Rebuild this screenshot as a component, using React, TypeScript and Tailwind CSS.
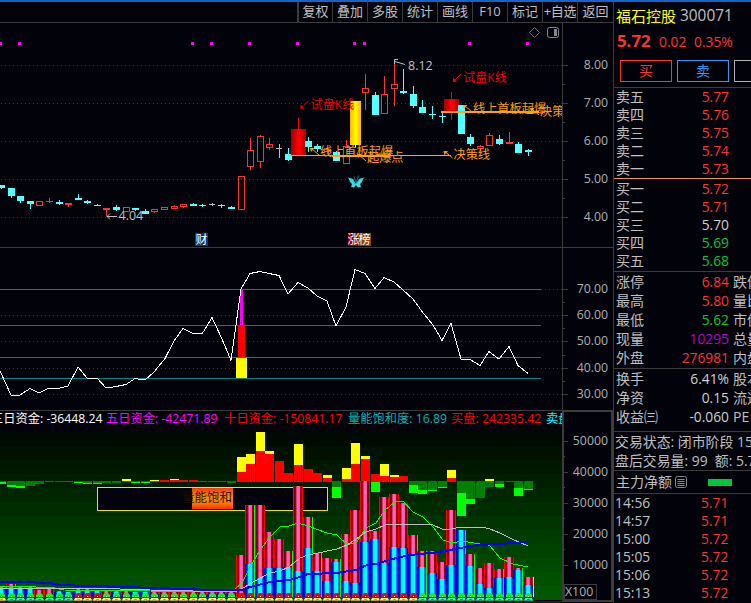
import type { ReactNode } from "react";

const FONT =
  "font-['Open_Sans','Noto_Sans_CJK_SC',sans-serif]";

const RED = "#ff3232";
const CYAN = "#54ffff";
const GRAY = "#c0c0c0";

const barX = (i: number) => Math.floor(1.66 + 9.575 * i);

// kind, body top, body bottom, wick top, wick bottom
type Candle = ["c" | "h" | "r" | "w" | "x", number, number, number, number];

const candles: Candle[] = [
  ["c", 185, 188, 185, 189],
  ["c", 188, 196, 188, 198],
  ["c", 196, 201, 196, 203],
  ["c", 201, 204, 201, 209],
  ["h", 201, 206, 201, 206],
  ["r", 201, 202, 198, 203],
  ["c", 202, 204, 200, 205],
  ["r", 203, 205, 203, 207],
  ["c", 198, 200, 194, 200],
  ["c", 201, 203, 200, 204],
  ["c", 205, 206, 204, 206],
  ["r", 208, 210, 208, 216],
  ["c", 207, 210, 205, 211],
  ["h", 207, 212, 207, 212],
  ["c", 208, 210, 208, 211],
  ["c", 211, 214, 209, 214],
  ["h", 209, 212, 209, 213],
  ["h", 207, 210, 207, 210],
  ["h", 206, 209, 205, 209],
  ["h", 204, 207, 204, 208],
  ["c", 204, 206, 203, 206],
  ["c", 205, 206, 204, 207],
  ["w", 204, 205, 203, 206],
  ["c", 205, 206, 204, 208],
  ["c", 207, 209, 206, 209],
  ["h", 176, 210, 176, 210],
  ["h", 150, 167, 138, 170],
  ["h", 136, 162, 135, 168],
  ["h", 144, 148, 138, 150],
  ["w", 148, 149, 144, 158],
  ["c", 154, 160, 148, 161],
  ["x", 129, 155, 118, 155],
  ["c", 141, 147, 137, 152],
  ["c", 146, 149, 144, 152],
  ["h", 149, 152, 147, 154],
  ["c", 152, 161, 151, 161],
  ["h", 146, 164, 140, 164],
  ["x", 101, 145, 101, 148],
  ["h", 88, 93, 74, 110],
  ["c", 95, 115, 92, 115],
  ["h", 94, 114, 76, 114],
  ["h", 84, 89, 62, 106],
  ["c", 91, 93, 69, 94],
  ["c", 94, 106, 86, 108],
  ["c", 107, 113, 100, 113],
  ["c", 114, 115, 106, 119],
  ["c", 116, 117, 112, 123],
  ["x", 99, 111, 92, 120],
  ["c", 105, 134, 105, 134],
  ["c", 137, 144, 134, 146],
  ["h", 146, 149, 145, 153],
  ["h", 135, 146, 133, 146],
  ["c", 139, 144, 135, 145],
  ["r", 142, 144, 132, 144],
  ["c", 144, 153, 142, 153],
  ["c", 150, 152, 149, 156],
];

const strengthLine =
  "0,371 11,395 20,395 30,388.5 39,393 49,388 60,388 68,386 78,367 87,378 97,378 106,388 116,386.5 126,384.5 135,378.5 145,380 154,372 165,358.5 174,341 183,328.5 193,333.5 202,334 212,317.5 222,339 231,360.5 241,289 250,273.5 260,271.5 269,273.5 279,275.5 288,294 298,282.5 308,288 317,296 327,301 336,326 346,307 355,269.5 365,273.5 375,288.5 384,277.5 394,282 403,290 413,299 422,311.5 433,325 442,340.5 451,323.5 461,359 470,359.5 480,365.5 489,351.5 499,359 509,346.5 518,365.5 528,373.5";

// yellow top, red top (bars above the zero line)
const inflow: Record<number, [number, number]> = {
  13: [479, 481],
  16: [480, 481],
  17: [480, 480],
  18: [479, 480],
  19: [480, 480],
  20: [480, 480],
  21: [481, 481],
  25: [457, 472],
  26: [454, 464],
  27: [432, 451],
  28: [451, 454],
  29: [461, 461],
  30: [473, 473],
  31: [444, 465],
  32: [469, 469],
  33: [473, 473],
  34: [475, 478],
  36: [468, 479],
  37: [443, 464],
  38: [456, 459],
  39: [474, 474],
  40: [464, 476],
  41: [475, 477],
  42: [476, 476],
  47: [470, 478],
  51: [479, 481],
};

// dark green bottom, bright green bottom (bars below the zero line)
const outflow: Record<number, [number, number]> = {
  0: [482, 484],
  1: [485, 487],
  2: [486, 488],
  3: [486, 486],
  4: [484, 484],
  5: [482, 482],
  6: [482, 482],
  7: [482, 482],
  8: [482, 483],
  9: [483, 484],
  10: [483, 484],
  11: [483, 483],
  12: [483, 483],
  14: [482, 483],
  15: [482, 483],
  16: [482, 482],
  22: [482, 482],
  23: [482, 482],
  24: [483, 483],
  35: [487, 498],
  39: [482, 492],
  43: [485, 493],
  44: [490, 494],
  45: [490, 491],
  46: [487, 488],
  48: [493, 516],
  49: [499, 504],
  50: [498, 498],
  51: [487, 487],
  52: [484, 487],
  53: [482, 482],
  54: [488, 496],
  55: [489, 490],
};

// pink top, cyan top
const volumes: [number, number][] = [
  [586, 588], [584, 588], [587, 588], [587, 588], [590, 597], [589, 597], [591, 592], [592, 592],
  [589, 591], [589, 591], [590, 591], [591, 596], [591, 592], [591, 596], [592, 592], [592, 592],
  [592, 594], [592, 597], [592, 597], [592, 597], [592, 597], [592, 595], [592, 594], [592, 594],
  [592, 593], [555, 597], [505, 564], [505, 578], [532, 568], [539, 568], [551, 567], [486, 571],
  [517, 548], [553, 571], [558, 581], [559, 562], [534, 581], [510, 583], [481, 542], [531, 539],
  [497, 563], [494, 547], [503, 548], [535, 555], [551, 567], [551, 573], [562, 579], [510, 565],
  [530, 530], [554, 566], [568, 584], [563, 588], [569, 578], [557, 577], [568, 570], [577, 585],
];

const ma5 =
  "0,586 25,586 36,587 55,588 64,590 150,591 235,592 236,588 242,583 250,567 260,550 270,537 280,527 289,526 298,523 308,526 327,533 337,535 347,544.5 356,543 366,528 376,523 385,510 395,502 403,501 413,512 423,517 433,527 443,540 452,543 462,541 480,544 490,546 500,558 513,564 528,567";
const ma10 =
  "0,588 60,588.5 120,589 150,590 235,592 245,587 255,581 270,573 280,571 289,567 300,558 308,555 318,553 337,549 347,545 356,539 366,532 376,529 385,525 390,524 417,524 433,525 442,529 452,529 460,527 482,527 490,529 500,533 512,539 528,546";
const ma30 =
  "0,582 20,582 50,583 60,585 88,586 125,587 155,588 185,589 215,590 242,590 250,587 270,582 289,580 300,577 308,574 337,573 356,570 367,565 376,564 390,559.5 410,555 440,552 460,548 477,545 500,544 513,543 528,542";

const tools = ["复权", "叠加", "多股", "统计", "画线", "F10", "标记", "+自选", "返回"];
const signals = [0, 19, 192, 211, 249, 297, 354, 364, 469, 527];

function Grid({ ys, from = 1 }: { ys: number[]; from?: number }) {
  return (
    <>
      {ys.map((y) => (
        <line key={y} x1={from} x2={562} y1={y + 0.5} y2={y + 0.5} stroke="#343438" strokeDasharray="1 3" />
      ))}
    </>
  );
}

function Axis({ ticks, minors }: { ticks: [number, string][]; minors: number[] }) {
  return (
    <>
      {ticks.map(([y, text]) => (
        <g key={text}>
          <rect x={562} y={y} width={6} height={1} fill="#3c3c3c" />
          <text x={608} y={y + 4} fontSize={12.3} textAnchor="end" fill="#b0b0b0">
            {text}
          </text>
        </g>
      ))}
      {minors.map((y) => (
        <rect key={y} x={562} y={y} width={3} height={1} fill="#3c3c3c" />
      ))}
    </>
  );
}

function CandleBar({ candle, index }: { candle: Candle; index: number }) {
  const [kind, top, bottom, high, low] = candle;
  const x = barX(index);
  if (kind === "x") {
    const hot = index === 37;
    return (
      <g>
        <rect x={x} y={high} width={1} height={low - high} fill={hot ? "#ff0" : "#f00"} />
        <rect
          x={hot ? 350 : x - 7}
          y={top}
          width={hot ? 11 : 15}
          height={bottom - top}
          fill={hot ? "url(#gold)" : "url(#crimson)"}
        />
      </g>
    );
  }
  const color = kind === "c" ? CYAN : kind === "w" ? GRAY : RED;
  return (
    <g fill={color}>
      {kind === "h" ? (
        <>
          <rect x={x} y={high} width={1} height={top - high} />
          <rect x={x} y={bottom} width={1} height={low - bottom} />
          <rect x={x - 2.5} y={top + 0.5} width={6} height={bottom - top - 1} fill="none" stroke={RED} />
        </>
      ) : (
        <>
          <rect x={x} y={high} width={1} height={low - high} />
          <rect x={x - 3} y={top} width={kind === "w" ? 6 : 7} height={bottom - top} />
        </>
      )}
    </g>
  );
}

function Note({
  x,
  y,
  color,
  up,
  children,
}: {
  x: number;
  y: number;
  color: string;
  up?: boolean;
  children: ReactNode;
}) {
  return (
    <g>
      <path
        d={up ? `M${x - 1} ${y - 1}L${x - 8} ${y - 7}` : `M${x - 2} ${y - 8}L${x - 9} ${y - 1}`}
        stroke={color}
        fill="none"
      />
      <path
        d={
          up
            ? `M${x - 10} ${y - 8}H${x - 5.5}L${x - 9} ${y - 4}Z`
            : `M${x - 10} ${y}V${y - 4.5}L${x - 6} ${y - 0.5}Z`
        }
        fill={color}
      />
      <text x={x} y={y} fontSize={12.2} fill={color}>
        {children}
      </text>
    </g>
  );
}

function PriceChart() {
  return (
    <svg className="block shrink-0" width={613} height={225} viewBox="0 23 613 225">
      <defs>
        <linearGradient id="crimson">
          <stop offset="0" stopColor="#a80000" />
          <stop offset=".2" stopColor="#c00000" />
          <stop offset=".45" stopColor="#ff0000" />
          <stop offset=".6" stopColor="#ff0000" />
          <stop offset="1" stopColor="#a80000" />
        </linearGradient>
        <linearGradient id="gold">
          <stop offset="0" stopColor="#ffb400" />
          <stop offset=".5" stopColor="#ffff00" />
          <stop offset="1" stopColor="#ffb400" />
        </linearGradient>
        <clipPath id="plot">
          <rect x={0} y={23} width={562} height={225} />
        </clipPath>
      </defs>
      <Grid ys={[65, 103, 141, 179, 217]} />
      {signals.map((x) => (
        <rect key={x} x={x === 0 ? -1 : x - 1} y={42} width={3} height={3} fill="#ff00ff" />
      ))}
      {candles.map((c, i) => (
        <CandleBar key={i} candle={c} index={i} />
      ))}
      <rect x={288} y={155} width={163} height={1} fill="#ffa800" />
      <rect x={332} y={155} width={58} height={2} fill="#ffa800" />
      <rect x={441} y={111} width={98} height={2} fill="#ffa800" />
      <g clipPath="url(#plot)">
        <Note x={310.5} y={109} color="#f00000">试盘K线</Note>
        <Note x={463} y={82} color="#f00000">试盘K线</Note>
        <Note x={320} y={156} color="#ffa000" up>线上首板起爆</Note>
        <Note x={367} y={162} color="#ffa000" up>起爆点</Note>
        <Note x={453.5} y={159} color="#ffa000" up>决策线</Note>
        <Note x={473} y={113} color="#ffa000" up>线上首板起爆</Note>
        <Note x={540} y={116} color="#ffa000" up>决策线</Note>
      </g>
      <g stroke={GRAY} fill="none">
        <path d="M107 216.5H117M110 213.5L107 216.5L110 219.5" />
        <path d="M395 61.5L405 64.5M398 59.5H394.5V64" />
        <path d="M534.5 27.5L539.5 32.5L534.5 37.5L529.5 32.5Z" stroke="#777" />
        <rect x={547.5} y={27.5} width={11} height={10} rx={2} stroke="#888" />
      </g>
      <rect x={554} y={29} width={3} height={7} fill="#888" />
      <text x={118.5} y={220} fontSize={12.5} fill={GRAY}>4.04</text>
      <text x={408} y={70} fontSize={12.5} fill={GRAY}>8.12</text>
      <g fill="#35e0e8">
        <path d="M355.5 183.5L353 179L348 177.5L350.5 182.5L352 184L351 187L354 187.5L355.8 185L358 187.5L361 187L360 184L361.5 182.5L364 177.5L359 179L356.5 183.5Z" />
        <path d="M356 182.5L354 176.5M356.3 182.5L358.5 175.5" stroke="#187880" fill="none" />
        <path d="M351 179.5L355 184L360.5 179.5" stroke="#20b8c4" strokeWidth={0.7} fill="none" />
      </g>
      <rect x={195} y={233} width={13} height={13} fill="#003c78" />
      <text x={195.5} y={244} fontSize={12} fill="#fff">财</text>
      <rect x={348} y={233} width={10} height={13} fill="#8c0000" />
      <rect x={358} y={233} width={13} height={13} fill="#8c4600" />
      <text x={347.5} y={244} fontSize={12} fill="#fff" textLength={23}>涨榜</text>
      <rect x={562} y={23} width={1} height={225} fill="#3c3c3c" />
      <rect x={0} y={247} width={613} height={1} fill="#3c3c3c" />
      <Axis
        ticks={[[65, "8.00"], [103, "7.00"], [141, "6.00"], [179, "5.00"], [217, "4.00"]]}
        minors={[84, 122, 160, 198]}
      />
    </svg>
  );
}

function StrengthChart() {
  return (
    <svg className="block shrink-0" width={613} height={163} viewBox="0 248 613 163">
      <Grid ys={[289, 315, 341, 368, 394]} />
      {[289, 325, 357, 378].map((y) => (
        <rect key={y} x={0} y={y} width={541} height={1} fill="#008484" />
      ))}
      <rect x={240} y={290} width={3} height={35} fill="#ff00ff" />
      <rect x={238} y={325} width={7} height={32} fill="#ff0000" />
      <rect x={236} y={358} width={11} height={20} fill="#ffff00" />
      <polyline points={strengthLine} fill="none" stroke="#fff" shapeRendering="crispEdges" />
      <rect x={562} y={248} width={1} height={163} fill="#3c3c3c" />
      <rect x={0} y={410} width={613} height={1} fill="#3c3c3c" />
      <Axis
        ticks={[[289, "70.00"], [315, "60.00"], [341, "50.00"], [368, "40.00"], [394, "30.00"]]}
        minors={[302, 328, 355, 381]}
      />
    </svg>
  );
}

function VolumeChart() {
  return (
    <svg className="block shrink-0" width={562} height={171} viewBox="0 432 562 171">
      <defs>
        <linearGradient id="pinkBar">
          <stop offset="0" stopColor="#ff0000" />
          <stop offset=".12" stopColor="#ff0000" />
          <stop offset=".12" stopColor="#6c0000" />
          <stop offset=".28" stopColor="#a00010" />
          <stop offset=".4" stopColor="#ff60b8" />
          <stop offset=".64" stopColor="#ff60b8" />
          <stop offset=".74" stopColor="#a00010" />
          <stop offset=".88" stopColor="#6c0000" />
          <stop offset=".88" stopColor="#ff0000" />
        </linearGradient>
        <linearGradient id="blueBar">
          <stop offset="0" stopColor="#0000c0" />
          <stop offset=".2" stopColor="#0010ff" />
          <stop offset=".36" stopColor="#00ffff" />
          <stop offset=".66" stopColor="#00ffff" />
          <stop offset=".8" stopColor="#0040ff" />
          <stop offset="1" stopColor="#0000a0" />
        </linearGradient>
        <linearGradient id="flame" x2="0" y2="1">
          <stop offset="0" stopColor="#ff3800" />
          <stop offset=".25" stopColor="#ff7000" />
          <stop offset=".5" stopColor="#ff9000" />
          <stop offset=".75" stopColor="#ff7000" />
          <stop offset="1" stopColor="#ff3000" />
        </linearGradient>
      </defs>
      {Array.from({ length: 12 }, (_, i) => (
        <rect key={i} x={0} y={432 + i * 14} width={562} height={14} fill={`rgb(0, ${10 + i * 7}, 0)`} />
      ))}
      {Object.entries(outflow).map(([i, [dark, bright]]) => (
        <g key={i}>
          <rect x={barX(+i) - 4} y={481} width={9} height={dark - 481} fill="#008000" />
          <rect x={barX(+i) - 4} y={dark} width={9} height={bright - dark} fill="#00ff00" />
        </g>
      ))}
      {Object.entries(inflow).map(([i, [yellow, red]]) => (
        <g key={i}>
          <rect x={barX(+i) - 4} y={yellow} width={9} height={red - yellow} fill="#ffff00" />
          <rect x={barX(+i) - 4} y={red} width={9} height={+i === 51 ? 0 : 482 - red} fill="#ff0000" />
        </g>
      ))}
      <rect x={97.5} y={487.5} width={230} height={23} fill="#02020a" stroke="#e6e600" />
      <rect x={192} y={488} width={41} height={21} fill="url(#flame)" />
      <text x={182} y={502} fontSize={12.5} fill="#1c1000">
        量能饱和.
      </text>
      {volumes.map(([pink, cyan], i) => {
        const x = barX(i) - 5;
        return (
          <g key={i}>
            {cyan > pink && <rect x={x} y={pink} width={10} height={597 - pink} fill="url(#pinkBar)" />}
            <rect x={x} y={cyan} width={10} height={597 - cyan} fill="url(#blueBar)" />
            {[1, 26, 30, 32, 33, 35, 39, 43, 44, 46, 48, 49, 52, 54].includes(i) && (
              <rect x={x + 9} y={pink} width={1} height={597 - pink} fill="#00ff00" />
            )}
          </g>
        );
      })}
      <rect x={533} y={577} width={1} height={20} fill="#ffff60" />
      <polyline points={ma5} fill="none" stroke="#00ff00" shapeRendering="crispEdges" />
      <polyline points={ma10} fill="none" stroke="#c0c0c0" shapeRendering="crispEdges" />
      <polyline points={ma30} fill="none" stroke="#0000ff" strokeWidth={2} shapeRendering="crispEdges" />
      <rect x={0} y={600} width={562} height={3} fill="#02020a" />
      {volumes.map((_, i) => {
        const x = barX(i);
        const calm = (i > 0 && i < 8) || i > 43;
        const hot = (i > 7 && i < 11) || (i > 24 && i < 44);
        return (
          <g key={i}>
            <path
              d={`M${x - 5} 601L${x - 3} 597.5H${x + 4}L${x + 6} 601Z`}
              fill={calm ? "#30f0b0" : "#ffff70"}
              stroke="#181800"
              strokeWidth={0.7}
            />
            <path d={`M${x - 1} 600.5L${x + 0.5} 599L${x + 2} 600.5`} fill="none" stroke={calm ? "#006050" : "#b06000"} />
            <path
              d={`M${x - 3} 597V595L${x - 1} 593H${x + 2}L${x + 4} 595V597Z`}
              fill={hot ? "#ff0000" : "#00ff00"}
            />
            <rect x={x} y={596} width={1} height={1} fill="#fff" />
          </g>
        );
      })}
      <rect x={0} y={601} width={562} height={2} fill="#1c1c1e" />
    </svg>
  );
}

function FlowHeader() {
  return (
    <div className="flex h-[21px] w-[562px] overflow-hidden text-[12.25px] leading-[15px] whitespace-pre">
      <span className="-ml-[9px] w-[115px] shrink-0 text-white">三日资金: -36448.24</span>
      <span className="w-[118px] shrink-0 text-[#ff00ff]">五日资金: -42471.89</span>
      <span className="w-[124px] shrink-0 text-[#ff0000]">十日资金: -150841.17</span>
      <span className="w-[103px] shrink-0 text-[#00b4b4]">量能饱和度: 16.89</span>
      <span className="w-[95px] shrink-0 text-[#ff0000]">买盘: 242335.42</span>
      <span className="w-[16px] shrink-0 overflow-hidden text-[#00ffff]">卖盘</span>
    </div>
  );
}

function VolumeAxis() {
  return (
    <svg className="block shrink-0" width={51} height={192} viewBox="562 411 51 192">
      <rect x={563} y={411} width={49} height={190} fill="none" stroke="#3c3c3c" strokeWidth={2} />
      <Axis
        ticks={[[441, "50000"], [472, "40000"], [503, "30000"], [534, "20000"], [565, "10000"]]}
        minors={[456, 487, 518, 549]}
      />
      <rect x={564.5} y={584.5} width={32} height={15} fill="none" stroke="#3c3c3c" />
      <text x={565} y={596} fontSize={12.3} fill="#b0b0b0">X100</text>
    </svg>
  );
}

function Toolbar() {
  return (
    <div className="flex h-[21px] justify-end border-b border-[#3c3c3c] text-[13px] leading-[19px] text-[#c0c0c0]">
      {tools.map((tool, i) => (
        <div
          key={tool}
          className={`flex shrink-0 justify-center overflow-hidden border-[#3c3c3c] whitespace-nowrap ${
            i === 0 ? "border-l-2" : "border-l"
          } ${i === tools.length - 1 ? "w-[36px]" : "w-[35px]"} ${tool === "+自选" ? "tracking-[-0.3px]" : ""}`}
        >
          {tool}
        </div>
      ))}
    </div>
  );
}

interface RowProps {
  label: string;
  value: string;
  tone: string;
  next?: string;
  tall?: boolean;
}

function Row({ label, value, tone, next, tall }: RowProps) {
  return (
    <div className={`flex shrink-0 pl-0.5 whitespace-nowrap ${tall ? "h-[19px] leading-[19px]" : "h-[18px] leading-[18px]"}`}>
      <span className="w-[50px] shrink-0 text-[#c0c0c0]">{label}</span>
      <span className={`w-[63px] shrink-0 text-right text-[13.8px] ${tone}`}>{value}</span>
      {next && <span className="ml-1 shrink-0 text-[#c0c0c0]">{next}</span>}
    </div>
  );
}

const red = "text-[#ff3232]";
const green = "text-[#00c832]";
const gray = "text-[#d0d0d0]";

const asks = [["卖五", "5.77"], ["卖四", "5.76"], ["卖三", "5.75"], ["卖二", "5.74"], ["卖一", "5.73"]];
const bids = [
  ["买一", "5.72", red],
  ["买二", "5.71", red],
  ["买三", "5.70", gray],
  ["买四", "5.69", green],
  ["买五", "5.68", green],
];
const stats = [
  ["涨停", "6.84", red, "跌停"],
  ["最高", "5.80", red, "量比"],
  ["最低", "5.62", green, "市值"],
  ["现量", "10295", "text-[#c000c0]", "总量"],
  ["外盘", "276981", red, "内盘"],
];
const ratios = [
  ["换手", "6.41%", gray, "股本"],
  ["净资", "0.15", gray, "流通"],
  ["收益㈢", "-0.060", gray, "PE"],
];
const ticksList = [
  ["14:56", "5.71"],
  ["14:57", "5.71"],
  ["15:00", "5.72"],
  ["15:05", "5.72"],
  ["15:06", "5.72"],
  ["15:13", "5.72"],
];

function QuotePanel() {
  return (
    <aside className="flex w-[138px] shrink-0 flex-col overflow-hidden border-l border-[#3c3c3c] text-[14px] text-[#c0c0c0]">
      <div className="flex h-[28px] items-center gap-1 pl-0.5 text-[15px] leading-none whitespace-nowrap">
        <span className="text-[#ffff00]">福石控股</span>
        <span className="text-[15.4px]">300071</span>
      </div>
      <div className="flex h-[23px] items-center pl-[3px] leading-none whitespace-nowrap text-[#ff3232]">
        <span className="w-[42px] text-[16.8px] font-bold">5.72</span>
        <span className="w-[35px] text-[13.8px]">0.02</span>
        <span className="text-[13.8px]">0.35%</span>
      </div>
      <div className="flex h-[34px] gap-[5px] pt-[7px] pl-[6px] text-center text-[14px] leading-[20px]">
        <div className="h-[22px] w-[52px] shrink-0 border border-[#ff3232] text-[#ff3232]">买</div>
        <div className="h-[22px] w-[52px] shrink-0 border border-[#3c96e6] text-[#3c96e6]">卖</div>
        <div className="h-[22px] w-[52px] shrink-0 border border-[#b0b0b0]" />
      </div>
      <div className="flex h-[92px] flex-col border-t border-b border-t-[#3c3c3c] border-b-[#e6a028]">
        {asks.map(([label, value]) => (
          <Row key={label} label={label} value={value} tone={red} />
        ))}
      </div>
      <div className="flex h-[93px] flex-col border-b border-[#3c3c3c] pt-px">
        {bids.map(([label, value, tone]) => (
          <Row key={label} label={label} value={value} tone={tone} />
        ))}
      </div>
      <div className="flex h-[97px] flex-col border-b border-[#3c3c3c]">
        {stats.map(([label, value, tone, next]) => (
          <Row key={label} label={label} value={value} tone={tone} next={next} tall />
        ))}
      </div>
      <div className="flex h-[63px] flex-col border-b border-[#3c3c3c]">
        {ratios.map(([label, value, tone, next]) => (
          <Row key={label} label={label} value={value} tone={tone} next={next} tall />
        ))}
      </div>
      <div className="h-[39px] border-b border-[#3c3c3c] pl-px text-[13.9px] leading-[19px] whitespace-pre">
        <div>交易状态: 闭市阶段 15</div>
        <div>盘后交易量: 99  额: 5.7</div>
      </div>
      <div className="flex h-[23px] items-center border-b border-[#3c3c3c] pl-0.5 leading-none">
        <span>主力净额</span>
        <svg className="ml-[3px]" width={12} height={12} viewBox="0 0 12 12">
          <rect x={0.5} y={0.5} width={11} height={11} rx={2} fill="none" stroke="#888" />
          <path d="M2.5 3.5H9.5M2.5 5.5H9.5M2.5 7.5H9.5M2.5 9.5H9.5" stroke="#888" />
        </svg>
        <span className="ml-[21px] h-[7px] w-[24px] bg-[#00c83c]" />
      </div>
      <div className="flex flex-col">
        {ticksList.map(([time, price]) => (
          <div key={time} className="flex h-[18px] pl-px text-[13.8px] leading-[18px]">
            <span className="w-[86px]">{time}</span>
            <span className="text-[#ff3232]">{price}</span>
          </div>
        ))}
      </div>
    </aside>
  );
}

export default function App() {
  return (
    <div className={`flex h-[603px] w-[751px] flex-col overflow-hidden bg-[#02020a] ${FONT}`}>
      <div className="h-[2px] shrink-0 bg-[#1464c8]" />
      <div className="flex min-h-0 flex-1">
        <main className="flex w-[613px] shrink-0 flex-col">
          <Toolbar />
          <PriceChart />
          <StrengthChart />
          <div className="flex">
            <div className="flex flex-col">
              <FlowHeader />
              <VolumeChart />
            </div>
            <VolumeAxis />
          </div>
        </main>
        <QuotePanel />
      </div>
    </div>
  );
}
